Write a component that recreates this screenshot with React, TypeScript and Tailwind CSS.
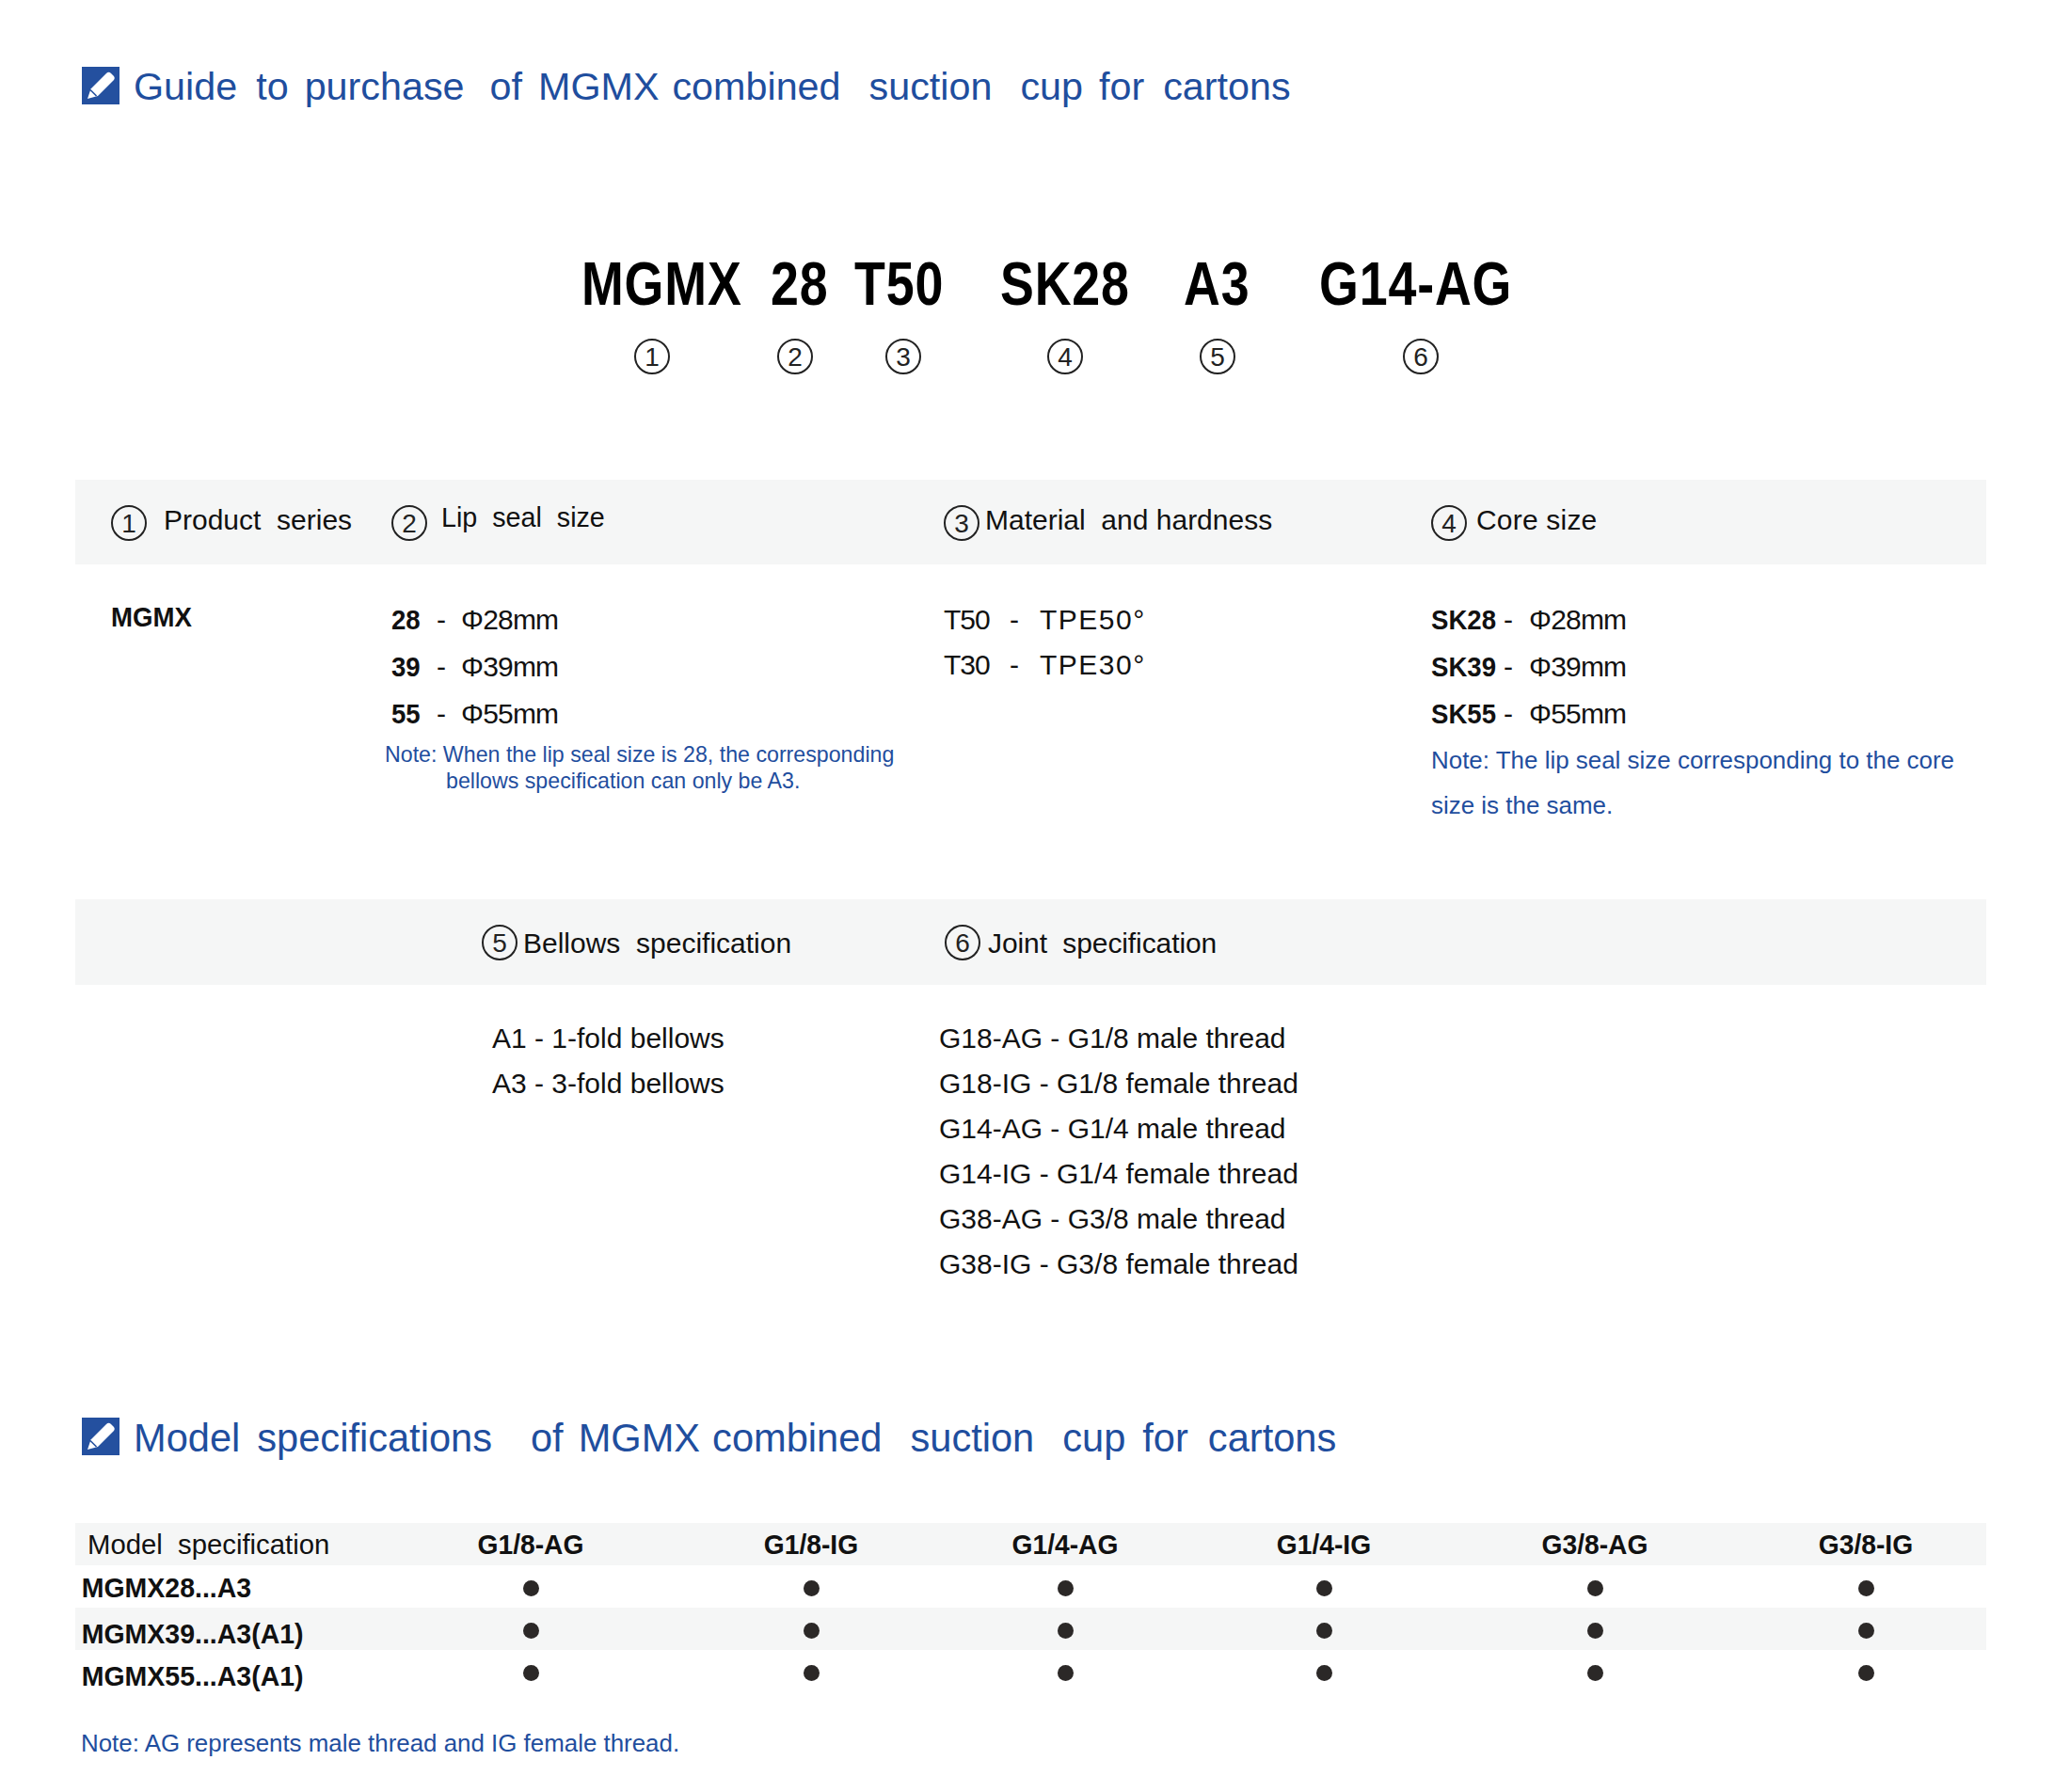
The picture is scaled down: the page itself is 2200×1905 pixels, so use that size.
// no narrow face installed, so bold labels get squeezed with a horizontal scale
const squeeze = "inline-block origin-left scale-x-[0.92] font-bold"
const codePart = "origin-left scale-x-[0.84]"

function PencilMark() {
  return (
    <svg viewBox="0 0 40 40" className="h-10 w-10 shrink-0">
      <rect width="40" height="40" fill="#24509f" />
      <path d="M6 34 L9.5 23.5 L26 7 Q28.5 4.5 31 7 L33.5 9.5 Q36 12 33.5 14.5 L17 31 Z" fill="#fff" />
      <path d="M9 24.5 L15.5 31" stroke="#24509f" strokeWidth="1.6" />
    </svg>
  )
}

function Circled({ n }: { n: number }) {
  return (
    <span className="flex h-[38px] w-[38px] shrink-0 items-center justify-center rounded-full border-2 border-[#222] pt-[2px] text-[28px] leading-none text-[#222]">
      {n}
    </span>
  )
}

function Heading({ className, children }: { className: string; children: React.ReactNode }) {
  return (
    <div className="ml-[87px] flex h-10 items-center gap-[15px]">
      <PencilMark />
      <div className={`flex leading-10 text-[#1f4e9e] ${className}`}>{children}</div>
    </div>
  )
}

const sizes = [
  { id: "28", sk: "SK28", value: "Φ28mm" },
  { id: "39", sk: "SK39", value: "Φ39mm" },
  { id: "55", sk: "SK55", value: "Φ55mm" },
]

const joints = [
  "G18-AG - G1/8 male thread",
  "G18-IG - G1/8 female thread",
  "G14-AG - G1/4 male thread",
  "G14-IG - G1/4 female thread",
  "G38-AG - G3/8 male thread",
  "G38-IG - G3/8 female thread",
]

const threads = ["G1/8-AG", "G1/8-IG", "G1/4-AG", "G1/4-IG", "G3/8-AG", "G3/8-IG"]
const models = ["MGMX28...A3", "MGMX39...A3(A1)", "MGMX55...A3(A1)"]

const columns = "grid grid-cols-[298px_587px_518px_1fr] pl-[38px]"
const tableCols = "grid h-[45px] grid-cols-[309px_350px_246px_294px_256px_320px_256px] items-center"

export default function App() {
  return (
    <div className="h-[1905px] w-[2200px] overflow-hidden bg-white pt-[71px] font-['Liberation_Sans',Arial,sans-serif] text-[#111]">
      <Heading className="mt-[2px] text-[41.3px]">
        <span>Guide</span>
        <span className="ml-[20px]">to</span>
        <span className="ml-[17px]">purchase</span>
        <span className="ml-[27px]">of</span>
        <span className="ml-[17px]">MGMX</span>
        <span className="ml-[14px]">combined</span>
        <span className="ml-[30px]">suction</span>
        <span className="ml-[30px]">cup</span>
        <span className="ml-[17px]">for</span>
        <span className="ml-[20px]">cartons</span>
      </Heading>

      {/* order code */}
      <div className="mt-[159px] flex h-16 text-[64px] font-bold leading-none tracking-[1px] text-black">
        <span className={`ml-[618px] w-[201px] ${codePart}`}>MGMX</span>
        <span className={`w-[89px] ${codePart}`}>28</span>
        <span className={`w-[155px] ${codePart}`}>T50</span>
        <span className={`w-[195px] ${codePart}`}>SK28</span>
        <span className={`w-[144px] ${codePart}`}>A3</span>
        <span className={codePart}>G14-AG</span>
      </div>
      <div className="mt-[26px] flex">
        <div className="ml-[674px] w-[152px]"><Circled n={1} /></div>
        <div className="w-[115px]"><Circled n={2} /></div>
        <div className="w-[172px]"><Circled n={3} /></div>
        <div className="w-[162px]"><Circled n={4} /></div>
        <div className="w-[216px]"><Circled n={5} /></div>
        <Circled n={6} />
      </div>

      <div className="mx-[80px] mt-[112px] w-[2031px]">
        {/* first block */}
        <div className={`${columns} h-[90px] items-center bg-[#f5f6f6] text-[30px] leading-none`}>
          <div className="mt-[2px] flex items-center gap-[18px]"><Circled n={1} /><span className="mb-[6px] whitespace-pre">{"Product  series"}</span></div>
          <div className="mt-[2px] flex items-center gap-[15px]"><Circled n={2} /><span className="mb-[12px] whitespace-pre text-[28.7px]">{"Lip  seal  size"}</span></div>
          <div className="mt-[2px] flex items-center gap-[6px]"><Circled n={3} /><span className="mb-[6px] whitespace-pre">{"Material  and hardness"}</span></div>
          <div className="mt-[2px] flex items-center gap-[10px]"><Circled n={4} /><span className="mb-[6px] tracking-[0.2px]">Core size</span></div>
        </div>
        <div className={`${columns} h-[356px] text-[30px]`}>
          <div className={`pt-[31px] leading-[50px] ${squeeze}`}>MGMX</div>
          <div className="pt-[33px]">
            {sizes.map((s) => (
              <div key={s.id} className="flex h-[50px] items-center">
                <span className={`w-[48px] ${squeeze}`}>{s.id}</span>
                <span className="w-[26px]">-</span>
                <span className="tracking-[-0.8px]">{s.value}</span>
              </div>
            ))}
            <p className="-ml-[7px] mt-[5px] whitespace-nowrap text-[23.2px] leading-7 text-[#1f4e9e]">
              Note: When the lip seal size is 28, the corresponding
              <br />
              <span className="pl-[65px]">bellows specification can only be A3.</span>
            </p>
          </div>
          <div className="pt-[35px] leading-[48px]">
            <div className="flex"><span className="w-[70px] tracking-[-1px]">T50</span><span className="w-[32px]">-</span><span className="tracking-[1.5px]">TPE50°</span></div>
            <div className="flex"><span className="w-[70px] tracking-[-1px]">T30</span><span className="w-[32px]">-</span><span className="tracking-[1.5px]">TPE30°</span></div>
          </div>
          <div className="pt-[33px]">
            {sizes.map((s) => (
              <div key={s.sk} className="flex h-[50px] items-center">
                <span className={`w-[77px] ${squeeze}`}>{s.sk}</span>
                <span className="w-[27px]">-</span>
                <span className="tracking-[-0.8px]">{s.value}</span>
              </div>
            ))}
            <p className="mt-[1px] whitespace-nowrap text-[25.95px] leading-[48px] text-[#1f4e9e]">
              Note: The lip seal size corresponding to the core
              <br />
              size is the same.
            </p>
          </div>
        </div>

        {/* second block */}
        <div className="flex h-[91px] items-center bg-[#f5f6f6] pl-[432px] text-[30px] leading-none">
          <div className="flex w-[492px] items-center gap-[6px]"><Circled n={5} /><span className="mt-[2px] whitespace-pre">{"Bellows  specification"}</span></div>
          <div className="flex items-center gap-[8px]"><Circled n={6} /><span className="mt-[2px] whitespace-pre tracking-[-0.1px]">{"Joint  specification"}</span></div>
        </div>
        <div className="flex h-[460px] pl-[443px] pt-[33px] text-[30px] leading-[48px]">
          <div className="w-[475px]">
            <div>A1 - 1-fold bellows</div>
            <div>A3 - 3-fold bellows</div>
          </div>
          <div>
            {joints.map((j) => (
              <div key={j}>{j}</div>
            ))}
          </div>
        </div>
      </div>

      <Heading className="mt-[4px] text-[41.6px]">
        <span>Model</span>
        <span className="ml-[18px]">specifications</span>
        <span className="ml-[41px]">of</span>
        <span className="ml-[16px]">MGMX</span>
        <span className="ml-[13px]">combined</span>
        <span className="ml-[30px]">suction</span>
        <span className="ml-[30px]">cup</span>
        <span className="ml-[18px]">for</span>
        <span className="ml-[21px]">cartons</span>
      </Heading>

      {/* model table */}
      <div className="mx-[80px] mt-[72px] w-[2031px] text-[30px] leading-none">
        <div className={`${tableCols} bg-[#f5f6f6]`}>
          <span className="whitespace-pre pl-[13px] text-[29.3px]">{"Model  specification"}</span>
          {threads.map((t) => (
            <span key={t} className="scale-x-[0.94] text-center font-bold">{t}</span>
          ))}
        </div>
        {models.map((m, i) => (
          <div key={m} className={`${tableCols} ${i === 1 ? "bg-[#f5f6f6]" : ""}`}>
            <span className={`origin-left scale-x-[0.95] whitespace-nowrap pl-[7px] font-bold ${i === 0 ? "pt-[2px]" : "pt-[10px]"}`}>{m}</span>
            {threads.map((t) => (
              <span key={t} className="mx-auto mt-[3px] h-[17px] w-[17px] rounded-full bg-[#2b2827]" />
            ))}
          </div>
        ))}
      </div>

      <p className="ml-[86px] mt-[39px] text-[25.9px] leading-[30px] text-[#1f4e9e]">
        Note: AG represents male thread and IG female thread.
      </p>
    </div>
  )
}
